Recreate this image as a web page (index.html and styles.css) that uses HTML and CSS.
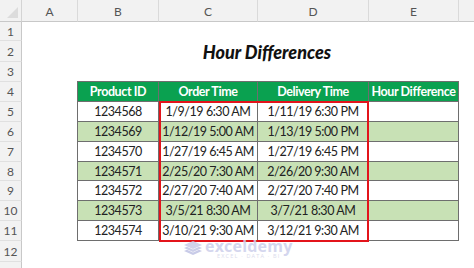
FILE: index.html
```html
<!DOCTYPE html>
<html>
<head>
<meta charset="utf-8">
<link rel="stylesheet" href="styles.css">
</head>
<body>
<div class="sheet">
  <div class="corner"><span class="tri"></span></div>
  <div class="colhdr">A</div>
  <div class="colhdr">B</div>
  <div class="colhdr">C</div>
  <div class="colhdr">D</div>
  <div class="colhdr">E</div>
  <div class="colhdr last"></div>

  <div class="rowhdr r1">1</div>
  <div class="rowhdr r2">2</div>
  <div class="rowhdr r3">3</div>
  <div class="rowhdr r4">4</div>
  <div class="rowhdr r5">5</div>
  <div class="rowhdr r6">6</div>
  <div class="rowhdr r7">7</div>
  <div class="rowhdr r8">8</div>
  <div class="rowhdr r9">9</div>
  <div class="rowhdr r10">10</div>
  <div class="rowhdr r11">11</div>
  <div class="rowhdr r12">12</div>
  <div class="rowhdr r13"></div>

  <div class="title">Hour Differences</div>

  <div class="cell th cb r4 first top">Product ID</div>
  <div class="cell th cc r4 top">Order Time</div>
  <div class="cell th cd r4 top">Delivery Time</div>
  <div class="cell th ce r4 top">Hour Difference</div>

  <div class="cell cb r5 first">1234568</div>
  <div class="cell cc r5">1/9/19 6:30 AM</div>
  <div class="cell cd r5">1/11/19 6:30 PM</div>
  <div class="cell ce r5"></div>

  <div class="cell alt cb r6 first">1234569</div>
  <div class="cell alt cc r6">1/12/19 5:00 AM</div>
  <div class="cell alt cd r6">1/13/19 5:00 PM</div>
  <div class="cell alt ce r6"></div>

  <div class="cell cb r7 first">1234570</div>
  <div class="cell cc r7">1/27/19 6:45 AM</div>
  <div class="cell cd r7">1/27/19 6:45 PM</div>
  <div class="cell ce r7"></div>

  <div class="cell alt cb r8 first">1234571</div>
  <div class="cell alt cc r8">2/25/20 7:30 AM</div>
  <div class="cell alt cd r8">2/26/20 9:30 AM</div>
  <div class="cell alt ce r8"></div>

  <div class="cell cb r9 first">1234572</div>
  <div class="cell cc r9">2/27/20 7:40 AM</div>
  <div class="cell cd r9">2/27/20 7:40 PM</div>
  <div class="cell ce r9"></div>

  <div class="cell alt cb r10 first">1234573</div>
  <div class="cell alt cc r10">3/5/21 8:30 AM</div>
  <div class="cell alt cd r10">3/7/21 8:30 AM</div>
  <div class="cell alt ce r10"></div>

  <div class="cell cb r11 first">1234574</div>
  <div class="cell cc r11">3/10/21 9:30 AM</div>
  <div class="cell cd r11">3/12/21 9:30 AM</div>
  <div class="cell ce r11"></div>

  <div class="highlight"></div>

  <div class="watermark">
    <svg class="wm-icon" width="20" height="14" viewBox="0 0 20 14">
      <path d="M1 4 L10 0 L19 4 L10 8 Z" fill="#c9cbe8"/>
      <path d="M1 7 L4 5.7 L10 8.6 L16 5.7 L19 7 L10 11 Z" fill="#c3c6e6"/>
      <path d="M1 10 L4 8.7 L10 11.6 L16 8.7 L19 10 L10 14 Z" fill="#bfc2e4"/>
    </svg>
    <div class="wm-text">
      <span class="wm-name">exceldemy</span>
      <span class="wm-sub">EXCEL · DATA · BI</span>
    </div>
  </div>
</div>
</body>
</html>
```

FILE: styles.css
```css
html, body {
  margin: 0;
  padding: 0;
  background: #ffffff;
}
body {
  width: 474px;
  height: 268px;
  overflow: hidden;
  font-family: Lato, "Open Sans", sans-serif;
}
.sheet {
  position: relative;
  display: grid;
  grid-template-columns: 22px 56px 81px 99px 111px 90px 15px;
  grid-template-rows: 22px 19px 21px 20px 20px 20px 20px 20px 19px 20px 20px 20px 21px 6px;
  width: 474px;
  height: 268px;
}
.corner {
  grid-column: 1;
  grid-row: 1;
  background: #f2f2f2;
  border-right: 1px solid #d4d4d4;
  border-bottom: 1px solid #c8c8c8;
  position: relative;
}
.tri {
  position: absolute;
  right: 3px;
  bottom: 3px;
  width: 0;
  height: 0;
  border-left: 11px solid transparent;
  border-bottom: 11px solid #dcdcdc;
}
.colhdr {
  grid-row: 1;
  background: #f2f2f2;
  border-right: 1px solid #dadada;
  border-bottom: 1px solid #c8c8c8;
  color: #555;
  font-size: 12px;
  display: flex;
  align-items: center;
  justify-content: center;
  padding-top: 1px;
}
.colhdr.last {
  border-right: none;
}
.rowhdr {
  grid-column: 1;
  background: #f2f2f2;
  border-right: 1px solid #c8c8c8;
  border-bottom: 1px solid #e0e0e0;
  color: #555;
  font-size: 12px;
  display: flex;
  align-items: center;
  justify-content: center;
}
.r1 { grid-row: 2; }
.r2 { grid-row: 3; }
.r3 { grid-row: 4; }
.r4 { grid-row: 5; }
.r5 { grid-row: 6; }
.r6 { grid-row: 7; }
.r7 { grid-row: 8; }
.r8 { grid-row: 9; }
.r9 { grid-row: 10; }
.r10 { grid-row: 11; }
.r11 { grid-row: 12; }
.r12 { grid-row: 13; }
.r13 { grid-row: 14; border-bottom: none; }
.cb { grid-column: 3; }
.cc { grid-column: 4; }
.cd { grid-column: 5; }
.ce { grid-column: 6; }

.title {
  grid-column: 4 / 6;
  grid-row: 3;
  font-weight: 900;
  font-style: italic;
  font-size: 18px;
  color: #111;
  display: flex;
  align-items: center;
  justify-content: center;
  padding-left: 6px;
  padding-top: 1px;
}
.cell {
  border-right: 1px solid #6e6e6e;
  border-bottom: 1px solid #6e6e6e;
  font-size: 12.5px;
  letter-spacing: -0.45px;
  color: #222;
  display: flex;
  align-items: center;
  justify-content: center;
  white-space: nowrap;
  background: #ffffff;
}
.cell.first {
  border-left: 1px solid #6e6e6e;
  margin-left: -1px;
}
.cell.top {
  border-top: 1px solid #6e6e6e;
  margin-top: -1px;
}
.cell.th {
  background: #0aa150;
  color: #ffffff;
  font-weight: bold;
  letter-spacing: -0.4px;
}
.cell.alt {
  background: #c8e1b5;
}
.highlight {
  grid-column: 4 / 6;
  grid-row: 6 / 13;
  border: 2.5px solid #e3141b;
  margin: -1px 0 -1px 0;
  z-index: 2;
}
.watermark {
  position: absolute;
  left: 183px;
  top: 239px;
  display: flex;
  align-items: flex-start;
  gap: 2px;
  opacity: 0.85;
  z-index: 3;
}
.wm-icon {
  margin-top: 2px;
}
.wm-text {
  display: flex;
  flex-direction: column;
  align-items: center;
}
.wm-name {
  font-family: "Open Sans", sans-serif;
  font-weight: bold;
  font-size: 16px;
  line-height: 14px;
  color: #cdd0ec;
  letter-spacing: 0.2px;
}
.wm-sub {
  font-family: "Open Sans", sans-serif;
  font-size: 5.5px;
  line-height: 7px;
  color: #d5d7ea;
  letter-spacing: 1.2px;
  margin-top: 0;
}
```
